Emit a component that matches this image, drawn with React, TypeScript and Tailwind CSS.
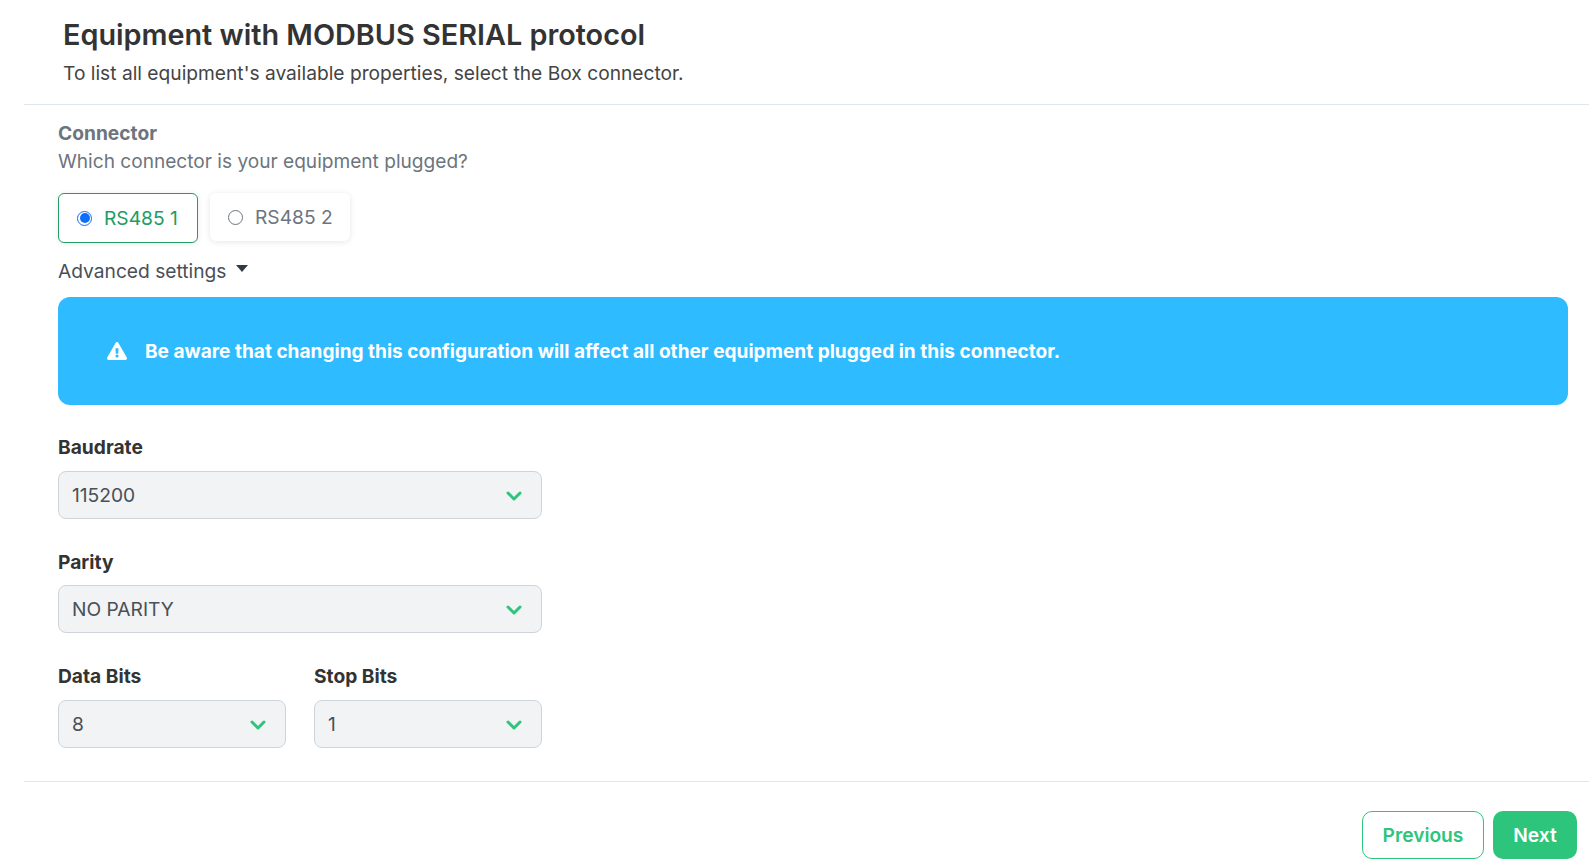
import { ChevronDown } from "lucide-react";
import { FaExclamationTriangle } from "react-icons/fa";

function Select({ label, value, className, gap }: { label: string; value: string; className: string; gap: string }) {
  return (
    <div className={className}>
      <div className="text-[19.2px] leading-[24px] font-bold text-[#333333]">{label}</div>
      <div className={`${gap} flex h-[48px] items-center justify-between rounded-[8px] border border-[#ced4da] bg-[#f1f3f5] pl-[13px] pr-[15px] text-[19.2px] text-[#495057]`}>
        <span>{value}</span>
        <ChevronDown size={24} strokeWidth={3} className="mt-[1px] text-[#2dc57c]" />
      </div>
    </div>
  );
}

export default function App() {
  return (
    <div className="h-[867px] w-[1589px] overflow-hidden bg-white font-['Inter',sans-serif]">
      <header className="ml-[24px] h-[105px] border-b border-[#dee6ee] pl-[39px] pt-[15px]">
        <h1 className="text-[28.8px] leading-[40px] font-semibold text-[#333333]">
          Equipment with MODBUS SERIAL protocol
        </h1>
        <p className="mt-[6px] text-[19.2px] leading-[24px] text-[#444444]">
          To list all equipment's available properties, select the Box connector.
        </p>
      </header>

      <main className="ml-[58px] mr-[21px] pt-[16px]">
        <div className="text-[19.2px] leading-[24px] font-bold text-[#6c757d]">Connector</div>
        <div className="mt-[4px] text-[19.1px] leading-[24px] text-[#6c757d]">
          Which connector is your equipment plugged?
        </div>

        <div className="mt-[20px] flex gap-[12px]">
          <div className="flex h-[50px] w-[140px] items-center rounded-[6px] border border-[#219c62] bg-white pl-[18px] shadow-[0_1px_6px_rgba(0,0,0,0.08)]">
            <span className="flex h-[15px] w-[15px] items-center justify-center rounded-full border border-[#0d6efd]">
              <span className="h-[10px] w-[10px] rounded-full bg-[#0d6efd]" />
            </span>
            <span className="ml-[12px] text-[19.2px] text-[#219c62]">RS485 1</span>
          </div>
          <div className="flex h-[48px] w-[140px] items-center rounded-[6px] bg-white pl-[18px] shadow-[0_1px_6px_rgba(0,0,0,0.1)]">
            <span className="h-[15px] w-[15px] rounded-full border border-[#6c757d]" />
            <span className="ml-[12px] text-[19.2px] text-[#6c757d]">RS485 2</span>
          </div>
        </div>

        <div className="mt-[16px] flex items-center text-[19.2px] leading-[24px] text-[#495057]">
          Advanced settings
          <span className="mb-[5px] ml-[10px] h-0 w-0 border-x-[6px] border-t-[7px] border-x-transparent border-t-[#343a40]" />
        </div>

        <div className="mt-[14px] flex h-[108px] items-center rounded-[12px] bg-[#2fbbff] pl-[49px] text-white">
          <FaExclamationTriangle size={20} />
          <span className="ml-[18px] pt-[2px] text-[19.07px] font-bold">
            Be aware that changing this configuration will affect all other equipment plugged in this connector.
          </span>
        </div>

        <div className="mt-[30px] flex w-[484px] flex-wrap gap-x-[28px] gap-y-[31px]">
          <Select label="Baudrate" value="115200" className="w-full" gap="mt-[12px]" />
          <Select label="Parity" value="NO PARITY" className="w-full" gap="mt-[11px]" />
          <Select label="Data Bits" value="8" className="w-[228px]" gap="mt-[12px]" />
          <Select label="Stop Bits" value="1" className="w-[228px]" gap="mt-[12px]" />
        </div>
      </main>

      <footer className="ml-[24px] mt-[33px] flex justify-end gap-[9px] border-t border-[#dee6ee] pr-[12px] pt-[29px]">
        <button className="h-[48px] w-[122px] rounded-[10px] border border-[#2dc57c] bg-white pt-[1px] text-[19.2px] font-semibold text-[#2dc57c]">
          Previous
        </button>
        <button className="h-[48px] w-[84px] rounded-[10px] bg-[#2dc57c] pt-[1px] text-[19.2px] font-semibold text-white">
          Next
        </button>
      </footer>
    </div>
  );
}
